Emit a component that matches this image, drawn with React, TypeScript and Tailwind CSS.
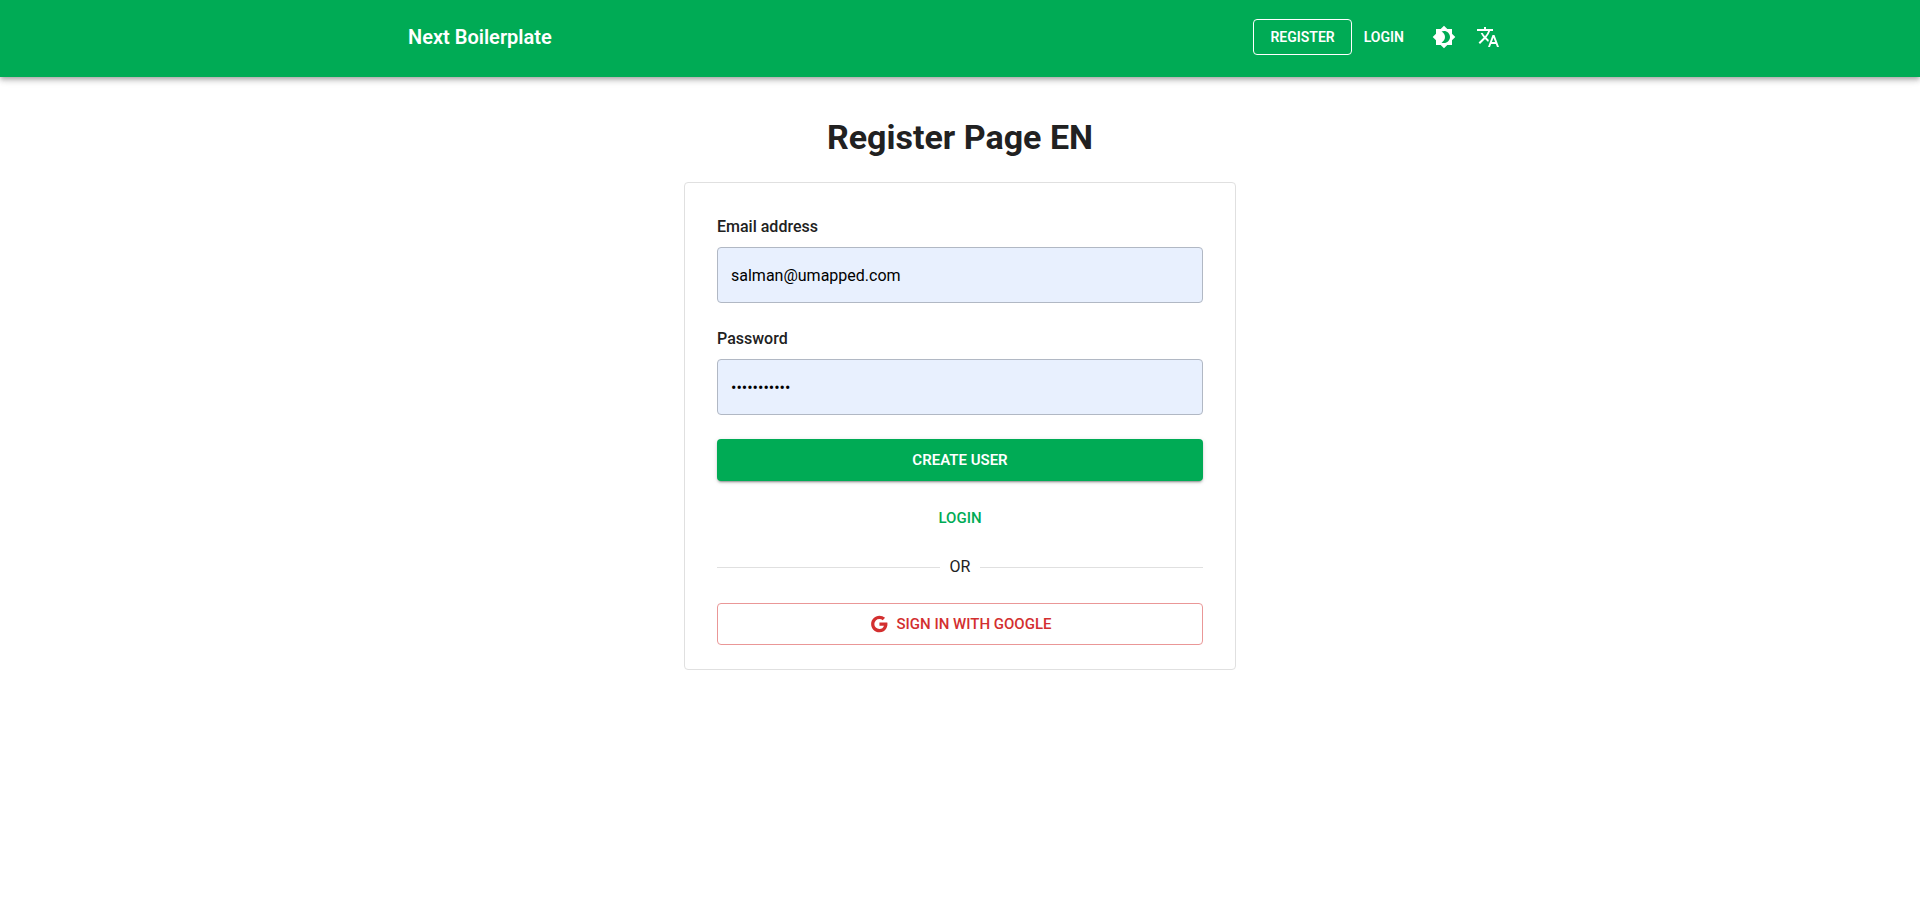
import { useState } from "react";
import type { InputHTMLAttributes } from "react";
import { MdBrightness4, MdTranslate } from "react-icons/md";

type FieldProps = InputHTMLAttributes<HTMLInputElement> & {
  id: string;
  label: string;
};

function Field({ id, label, ...rest }: FieldProps) {
  return (
    <div className="flex flex-col gap-2">
      <label htmlFor={id} className="text-base font-medium">
        {label}
      </label>
      <input
        id={id}
        className="h-14 w-full rounded border border-[#b1b8c4] bg-[#e8f0fe] px-[13px] text-base text-black outline-none focus:border-[#00ab55]"
        {...rest}
      />
    </div>
  );
}

function GoogleIcon() {
  return (
    <svg viewBox="0 0 24 24" className="size-5" fill="currentColor" aria-hidden="true">
      <path d="M12.545 10.239v3.821h5.445c-.712 2.315-2.647 3.972-5.445 3.972a6.033 6.033 0 1 1 0-12.064c1.498 0 2.866.549 3.921 1.453l2.814-2.814A9.969 9.969 0 0 0 12.545 2C7.021 2 2.543 6.477 2.543 12s4.478 10 10.002 10c8.396 0 10.249-7.85 9.426-11.748l-9.426-.013z" />
    </svg>
  );
}

function Header() {
  return (
    <header className="bg-[#00ab55] text-white shadow-[0_2px_4px_-1px_rgba(0,0,0,0.2),0_4px_5px_0_rgba(0,0,0,0.14),0_1px_10px_0_rgba(0,0,0,0.12)]">
      <div className="mx-auto flex max-w-[1152px] items-center justify-between px-6 pt-[17px] pb-5">
        <a href="#" className="text-xl font-semibold">
          Next Boilerplate
        </a>
        <nav className="flex items-center">
          <a
            href="#register"
            className="flex h-9 items-center rounded border border-white px-4 text-sm font-semibold uppercase"
          >
            Register
          </a>
          <a
            href="#login"
            className="flex h-9 items-center px-3 text-sm font-semibold uppercase"
          >
            Login
          </a>
          <div className="ml-2 flex items-center gap-1 pr-1">
            <button type="button" aria-label="Toggle theme" className="rounded-full p-2">
              <MdBrightness4 className="size-6" />
            </button>
            <button type="button" aria-label="Change language" className="rounded-full p-2">
              <MdTranslate className="size-6" />
            </button>
          </div>
        </nav>
      </div>
    </header>
  );
}

export default function App() {
  const [email, setEmail] = useState("salman@umapped.com");
  const [password, setPassword] = useState("umapped1234");

  return (
    <div className="min-h-screen bg-white font-[Roboto,sans-serif] text-[#212121]">
      <Header />
      <main className="mx-auto max-w-[600px] px-6 pt-10">
        <h1 className="text-center text-[34px] leading-[41px] font-bold">Register Page EN</h1>
        <form
          className="mt-6 flex flex-col rounded border border-[#e0e0e0] px-8 pt-8 pb-6"
          onSubmit={(e) => e.preventDefault()}
        >
          <div className="flex flex-col gap-6">
            <Field
              id="email"
              label="Email address"
              type="email"
              value={email}
              onChange={(e) => setEmail(e.target.value)}
            />
            <Field
              id="password"
              label="Password"
              type="password"
              value={password}
              onChange={(e) => setPassword(e.target.value)}
            />
            <button
              type="submit"
              className="h-[42px] rounded bg-[#00ab55] text-[15px] font-semibold text-white uppercase shadow-[0_3px_1px_-2px_rgba(0,0,0,0.2),0_2px_2px_0_rgba(0,0,0,0.14),0_1px_5px_0_rgba(0,0,0,0.12)]"
            >
              Create user
            </button>
          </div>
          <a
            href="#login"
            className="mt-4 flex h-[42px] items-center justify-center rounded text-[15px] font-medium text-[#00ab55] uppercase"
          >
            Login
          </a>
          <div className="mt-4 mb-6 flex items-center gap-2.5 text-base">
            <span className="h-px flex-1 bg-[#e0e0e0]" />
            OR
            <span className="h-px flex-1 bg-[#e0e0e0]" />
          </div>
          <button
            type="button"
            className="flex h-[42px] items-center justify-center gap-2 rounded border border-[#ea9797] text-[15px] font-medium text-[#d32f2f] uppercase"
          >
            <GoogleIcon />
            Sign in with Google
          </button>
        </form>
      </main>
    </div>
  );
}
